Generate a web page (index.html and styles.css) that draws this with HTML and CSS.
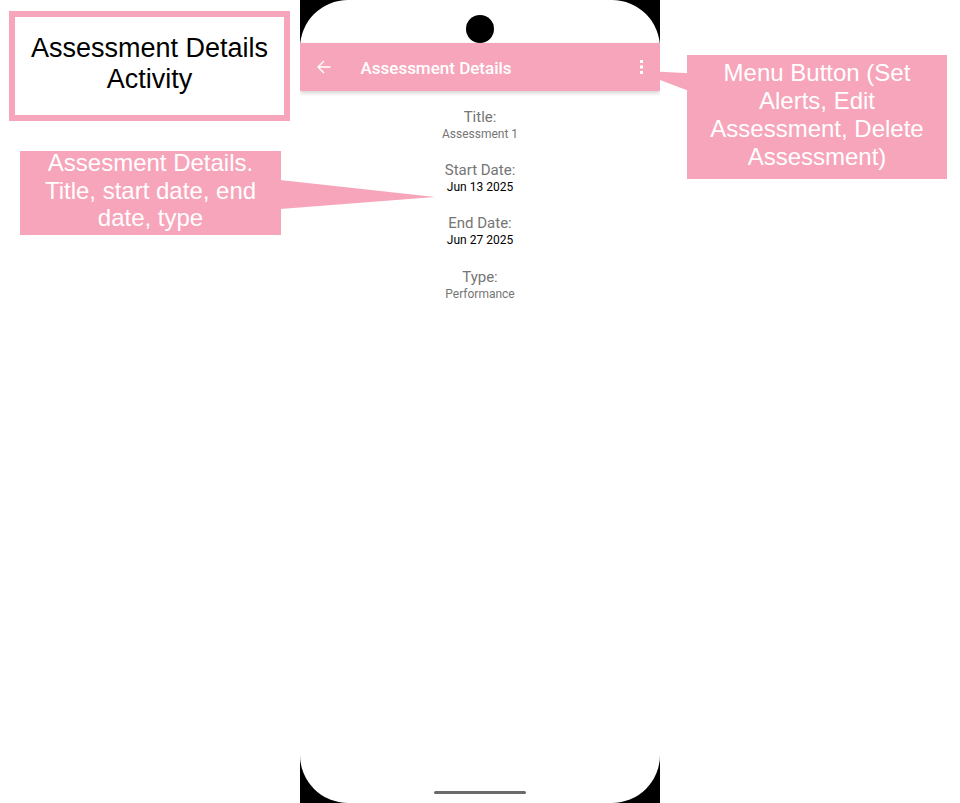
FILE: index.html
```html
<!DOCTYPE html>
<html lang="en">
<head>
<meta charset="utf-8">
<title>Assessment Details Activity</title>
<link rel="stylesheet" href="styles.css">
</head>
<body>
<div class="canvas">
  <div class="phone">
    <div class="screen">
      <div class="statusbar"><div class="camera"></div></div>
      <div class="toolbar">
        <svg class="back" width="14" height="14" viewBox="0 0 14 14"><path d="M13.5 7H1.2M7 1L1 7l6 6" fill="none" stroke="#fff" stroke-width="1.4"/></svg>
        <div class="tb-title">Assessment Details</div>
        <svg class="more" width="3" height="14" viewBox="0 0 3 14"><rect x="0" y="0" width="3" height="3" fill="#fff"/><rect x="0" y="5.5" width="3" height="3" fill="#fff"/><rect x="0" y="11" width="3" height="3" fill="#fff"/></svg>
      </div>
      <div class="details">
        <div class="field"><div class="label">Title:</div><div class="value muted">Assessment 1</div></div>
        <div class="field"><div class="label">Start Date:</div><div class="value">Jun 13 2025</div></div>
        <div class="field"><div class="label">End Date:</div><div class="value">Jun 27 2025</div></div>
        <div class="field"><div class="label">Type:</div><div class="value muted">Performance</div></div>
      </div>
      <div class="homebar"></div>
    </div>
  </div>

  <div class="note-activity">Assessment Details<br>Activity</div>

  <svg class="pointers" width="960" height="803" viewBox="0 0 960 803">
    <polygon points="280,180 280,209 435,197" fill="#f7a5bb"/>
    <polygon points="660,71.7 660,80 689,91 689,73.3" fill="#f7a5bb"/>
  </svg>

  <div class="callout callout-details"><div class="callout-text">Assesment Details.<br>Title, start date, end<br>date, type</div></div>

  <div class="callout callout-menu"><div class="callout-text">Menu Button (Set<br>Alerts, Edit<br>Assessment, Delete<br>Assessment)</div></div>
</div>
</body>
</html>
```

FILE: styles.css
```css
html, body {
  margin: 0;
  padding: 0;
  background: #ffffff;
}

.canvas {
  position: relative;
  width: 960px;
  height: 803px;
  overflow: hidden;
}

.phone {
  margin-left: 300px;
  width: 360px;
  height: 803px;
  background: #000000;
}

.screen {
  position: relative;
  width: 360px;
  height: 803px;
  background: #ffffff;
  border-radius: 48px;
  overflow: hidden;
}

.statusbar {
  height: 43px;
  box-sizing: border-box;
  padding-top: 14.5px;
  display: flex;
  justify-content: center;
}

.camera {
  width: 28px;
  height: 28px;
  border-radius: 50%;
  background: #000000;
}

.toolbar {
  position: relative;
  height: 48px;
  background: #f7a5bb;
  display: flex;
  align-items: center;
  padding-left: 16.5px;
  box-shadow: 0 2px 4px rgba(0, 0, 0, 0.18);
}

.back {
  display: block;
  flex: none;
}

.tb-title {
  margin-left: 30px;
  font-family: Roboto, "Noto Sans", sans-serif;
  font-weight: 500;
  font-size: 17px;
  color: #ffffff;
  line-height: 20px;
  margin-top: 1px;
}

.more {
  display: block;
  margin-left: auto;
  margin-right: 17.5px;
  flex: none;
}

.details {
  padding-top: 16.8px;
  display: flex;
  flex-direction: column;
  align-items: center;
  font-family: Roboto, "Noto Sans", sans-serif;
  text-align: center;
}

.field {
  margin-bottom: 19.33px;
}

.label {
  font-size: 15px;
  line-height: 18px;
  color: #757575;
}

.value {
  font-size: 12px;
  line-height: 16px;
  color: #000000;
}

.value.muted {
  color: #757575;
}

.homebar {
  position: absolute;
  left: 134px;
  bottom: 9px;
  width: 92px;
  height: 3.5px;
  border-radius: 2px;
  background: #6b6b6b;
}

.note-activity {
  position: absolute;
  left: 9px;
  top: 11px;
  width: 281px;
  height: 110px;
  box-sizing: border-box;
  border: 6px solid #f7a5bb;
  padding-top: 16px;
  background: #ffffff;
  font-family: "Liberation Sans", Arial, sans-serif;
  font-size: 27px;
  color: #000000;
  text-align: center;
  white-space: nowrap;
}

.pointers {
  position: absolute;
  left: 0;
  top: 0;
  pointer-events: none;
}

.callout {
  position: absolute;
  box-sizing: border-box;
  background: #f7a5bb;
  font-family: "Liberation Sans", Arial, sans-serif;
  font-size: 24px;
  color: #ffffff;
  text-align: center;
  white-space: nowrap;
}

.callout-details {
  left: 20px;
  top: 151px;
  width: 261px;
  height: 84px;
}

.callout-details .callout-text {
  line-height: 27.6px;
  margin-top: -2px;
}

.callout-menu {
  left: 687px;
  top: 55px;
  width: 260px;
  height: 124px;
  padding-top: 4px;
}
```
